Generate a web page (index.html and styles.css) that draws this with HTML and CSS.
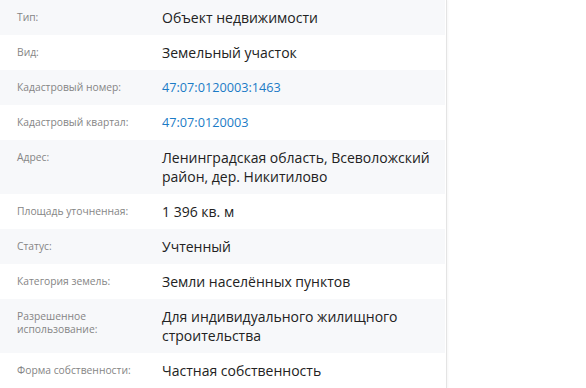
FILE: index.html
```html
<!DOCTYPE html>
<html lang="ru">
<head>
<meta charset="utf-8">
<link rel="stylesheet" href="styles.css">
</head>
<body>
<div class="panel">
  <div class="row alt"><div class="label">Тип:</div><div class="value">Объект недвижимости</div></div>
  <div class="row"><div class="label">Вид:</div><div class="value">Земельный участок</div></div>
  <div class="row alt"><div class="label">Кадастровый номер:</div><div class="value link">47:07:0120003:1463</div></div>
  <div class="row"><div class="label">Кадастровый квартал:</div><div class="value link">47:07:0120003</div></div>
  <div class="row alt"><div class="label">Адрес:</div><div class="value">Ленинградская область, Всеволожский район, дер. Никитилово</div></div>
  <div class="row"><div class="label">Площадь уточненная:</div><div class="value">1 396 кв. м</div></div>
  <div class="row alt"><div class="label">Статус:</div><div class="value">Учтенный</div></div>
  <div class="row"><div class="label">Категория земель:</div><div class="value">Земли населённых пунктов</div></div>
  <div class="row alt"><div class="label">Разрешенное использование:</div><div class="value">Для индивидуального жилищного строительства</div></div>
  <div class="row"><div class="label">Форма собственности:</div><div class="value">Частная собственность</div></div>
</div>
</body>
</html>
```
FILE: styles.css
```css
html, body {
  margin: 0;
  padding: 0;
  background: #fff;
  font-family: "Open Sans", "Noto Sans", sans-serif;
}
.panel {
  width: 446px;
  border-right: 1px solid #e4e4e4;
  box-shadow: 1px 0 2px rgba(0, 0, 0, 0.04);
  height: 388px;
  overflow: hidden;
}
.row {
  display: flex;
  padding: 8px 0;
  width: 445px;
}
.row.alt {
  background: #f7f8fa;
}
.label {
  width: 145px;
  padding-left: 17px;
  padding-top: 3px;
  box-sizing: content-box;
  font-size: 10.3px;
  line-height: 12.5px;
  color: #858585;
  flex: none;
}
.value {
  width: 270px;
  font-size: 14px;
  line-height: 19px;
  color: #222;
}
.value.link {
  color: #1b7bc6;
  font-size: 12.7px;
}
```
